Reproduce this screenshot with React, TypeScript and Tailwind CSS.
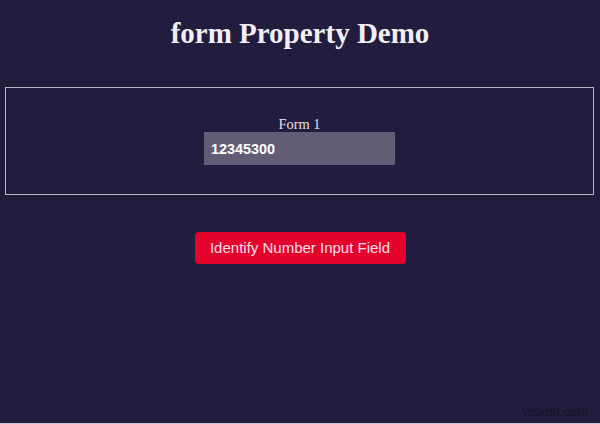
import React, { useState } from "react";

const App = () => {
  const [value, setValue] = useState("12345300");

  return (
    <div className="relative w-[600px] h-[424px] overflow-hidden bg-[#221c3f] flex flex-col">
      <h1 className="mt-[19px] text-center text-[29px] leading-[29px] font-bold text-[#f1eff5] font-['Liberation_Serif',serif]">
        form Property Demo
      </h1>

      <div className="mt-[39px] ml-[5px] mr-[6px] h-[108px] border border-[#b9b5c6] flex flex-col items-center pt-[28px]">
        <label className="text-[14.4px] leading-[16px] text-[#e4e1ea] font-['Liberation_Serif',serif]">
          Form 1
        </label>
        <input
          type="number"
          value={value}
          onChange={(e) => setValue(e.target.value)}
          className="w-[191px] h-[33px] pl-[7px] bg-[#635c77] text-white font-bold text-[14.4px] font-['Liberation_Sans',sans-serif] outline-none [appearance:textfield] [&::-webkit-inner-spin-button]:appearance-none"
        />
      </div>

      <button className="mt-[37px] self-center w-[211px] h-[32px] rounded-[4px] bg-[#e5022d] text-[#f7e0e6] text-[15px] font-['Liberation_Sans',sans-serif]">
        Identify Number Input Field
      </button>

      <span className="absolute right-[12px] top-[405px] text-[13px] leading-[14px] text-[#16132b] font-['Liberation_Sans',sans-serif]">
        wsxdn.com
      </span>
      <div className="absolute bottom-0 left-0 w-full h-px bg-[#c9c6d3]" />
    </div>
  );
};

export default App;
